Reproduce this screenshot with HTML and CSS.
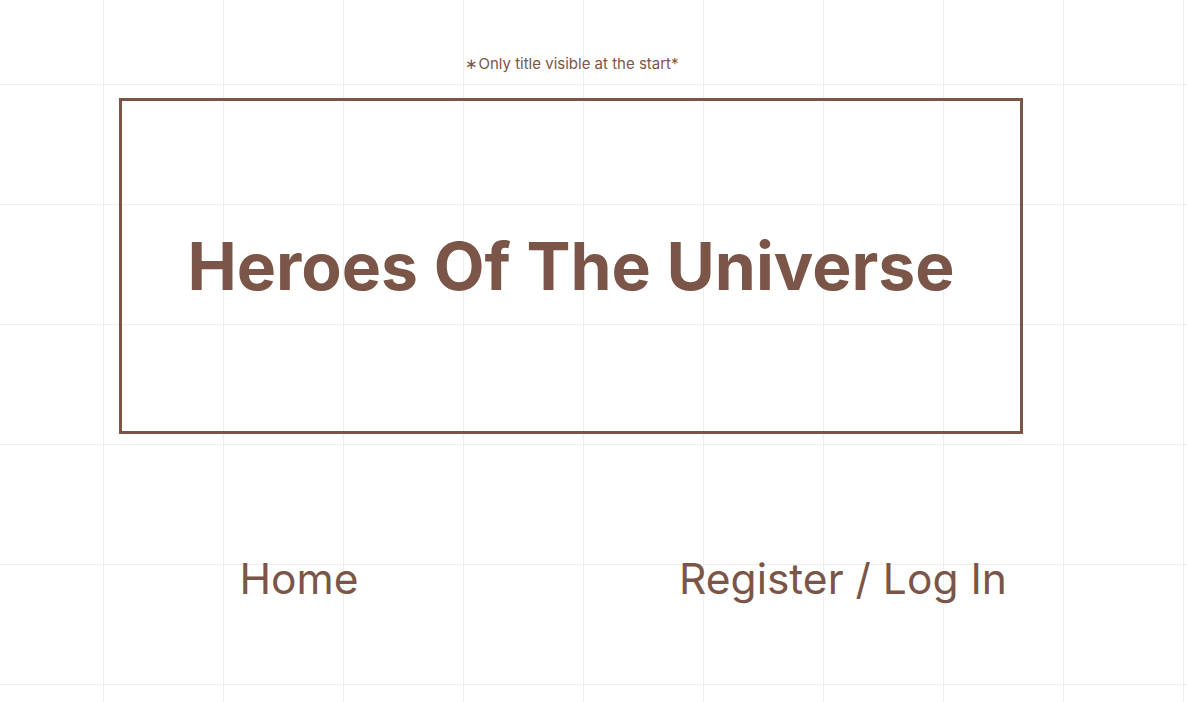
FILE: index.html
```html
<!DOCTYPE html>
<html lang="en">
<head>
<meta charset="utf-8">
<title>Heroes Of The Universe</title>
<link rel="stylesheet" href="styles.css">
</head>
<body>
<div class="page">
  <p class="note">∗Only title visible at the start*</p>
  <div class="title-box">
    <h1 class="title">Heroes Of The Universe</h1>
  </div>
  <nav class="nav">
    <a class="nav-link" href="#">Home</a>
    <a class="nav-link" href="#">Register / Log In</a>
  </nav>
</div>
</body>
</html>
```

FILE: styles.css
```css
html, body {
  margin: 0;
  padding: 0;
}
body {
  width: 1187px;
  height: 702px;
  overflow: hidden;
  background-color: #ffffff;
  background-image:
    linear-gradient(to right, #eeeeee 1px, transparent 1px),
    linear-gradient(to bottom, #eeeeee 1px, transparent 1px);
  background-size: 120px 120px;
  background-position: 103px 84px;
  font-family: Inter, "Noto Sans", sans-serif;
  color: #7b5648;
}
.page {
  width: 904px;
  margin-left: 119px;
  padding-top: 54px;
}
.note {
  margin: 0;
  font-size: 15px;
  line-height: 20px;
  text-align: center;
  padding-left: 2px;
}
.title-box {
  margin-top: 24px;
  box-sizing: border-box;
  height: 336px;
  border: 3px solid #7b5648;
  display: flex;
  align-items: center;
  justify-content: center;
}
.title {
  margin: 0;
  font-size: 66px;
  font-weight: 700;
  line-height: 80px;
}
.nav {
  display: flex;
  justify-content: space-between;
  margin-top: 120px;
}
.nav-link {
  width: 360px;
  text-align: center;
  font-size: 42.5px;
  line-height: 50px;
  color: #7b5648;
  text-decoration: none;
}
```
